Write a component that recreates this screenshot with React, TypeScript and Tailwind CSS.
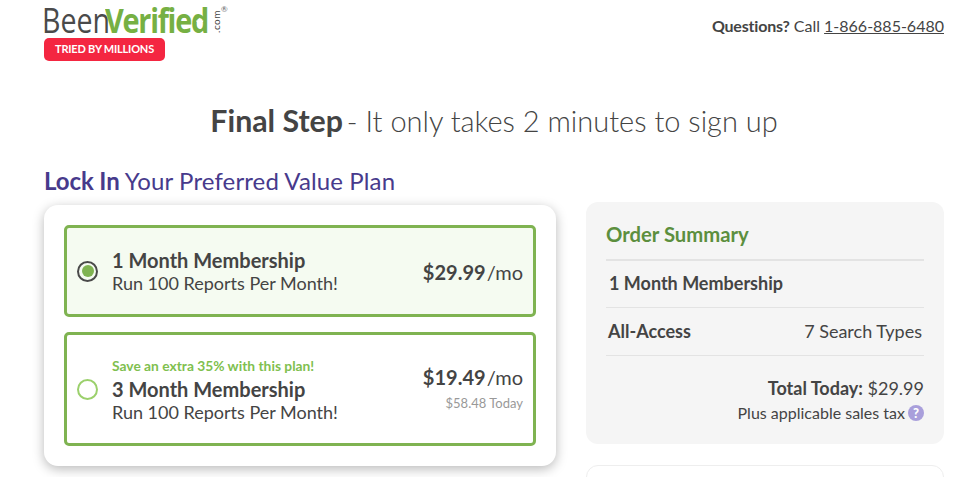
const font = { fontFamily: "Lato, 'Liberation Sans', sans-serif" };

function Logo() {
  return (
    <div className="flex items-start h-[33px] w-[190px]">
      <div className="flex w-[166px] shrink-0 ml-[-2px] text-[34px] leading-[30px] h-[33px] font-['Open_Sans',sans-serif] whitespace-nowrap">
        <span className="block w-[63px] shrink-0 origin-left scale-x-[0.84] text-[#4a4a4a]">Been</span>
        <span className="relative block w-[103px] shrink-0 origin-left scale-x-[0.85] font-bold text-[#76b043] tracking-[-1.5px]">
          Verified
          <svg className="absolute left-[105px] top-[12px]" width="13" height="10" viewBox="0 0 24 24" fill="#fff">
            <path d="M12 1l3.4 7.3 7.6.9-5.6 5.4 1.5 8L12 18.6 5.1 22.6l1.5-8L1 9.2l7.6-.9z" />
          </svg>
        </span>
      </div>
      <span className="text-[10px] leading-none tracking-[0.5px] text-[#444] [writing-mode:vertical-rl] rotate-180 mt-[5px] ml-[3px]">.com</span>
      <span className="text-[8px] leading-none text-[#666] mt-[0px]">®</span>
    </div>
  );
}

function PlanRow({ selected, promo, title, price, today }: { selected?: boolean; promo?: string; title: string; price: string; today?: string }) {
  return (
    <div className={`flex items-center border-[3px] border-[#7fb351] rounded-[5px] pl-[10px] pr-[10px] ${selected ? "h-[92px] bg-[#f5fbf1]" : "h-[114px] bg-white"}`}>
      {selected ? (
        <div className="w-[21px] h-[21px] rounded-full border-[2px] border-[#4a4a4a] flex items-center justify-center">
          <div className="w-[12px] h-[12px] rounded-full bg-[#7fb351]" />
        </div>
      ) : (
        <div className="w-[21px] h-[21px] rounded-full border-[2px] border-[#9bd06c]" />
      )}
      <div className={`ml-[14px] flex-1 ${selected ? "mb-[1px]" : ""}`}>
        {promo && <p className="text-[13.8px] leading-[18px] pt-[1px] mb-[1px] font-bold text-[#7fc04f]">{promo}</p>}
        <p className="text-[20px] leading-[26px] font-bold text-[#444]">{title}</p>
        <p className="text-[18px] leading-[21px] text-[#444]">Run 100 Reports Per Month!</p>
      </div>
      <div className={`text-right ${today ? "mb-[3px]" : "pt-[2px]"}`}>
        <p className="text-[20px] leading-[26px] text-[#444]">
          <span className="font-bold mr-[-4px]">{price}</span> /mo
        </p>
        {today && <p className="text-[13px] leading-[16px] mt-[5px] text-[#999]">{today}</p>}
      </div>
    </div>
  );
}

export default function App() {
  return (
    <div className="h-screen overflow-hidden bg-white text-[#444]" style={font}>
      <div className="w-[900px] ml-[44px]">
        {/* Header */}
        <header className="flex items-start justify-between pt-[5px]">
          <div>
            <Logo />
            <div className="w-[121px] h-[23px] bg-[#f42641] rounded-[5px] text-white text-[11px] tracking-[-0.2px] font-bold flex items-center justify-center">
              TRIED BY MILLIONS
            </div>
          </div>
          <p className="text-[16px] leading-[20px] mt-[11px]">
            <span className="font-bold tracking-[-0.2px]">Questions?</span> Call <span className="underline">1-866-885-6480</span>
          </p>
        </header>

        <h1 className="h-[36px] text-[29px] leading-[36px] text-center mt-[41px] font-light">
          <span className="font-bold text-[30.3px]">Final Step</span> <span className="ml-[-4px]">- It only takes 2 minutes to sign up</span>
        </h1>

        <h2 className="text-[24px] leading-[30px] text-[#473a8c] mt-[28px]">
          <span className="font-bold tracking-[-0.1px]">Lock In</span> <span className="ml-[-1px] tracking-[0.12px]">Your Preferred Value Plan</span>
        </h2>

        <div className="flex items-start justify-between">
          {/* Plans */}
          <div className="w-[512px] mt-[9px] bg-white rounded-[14px] shadow-[0_3px_12px_rgba(0,0,0,0.28)] p-[20px] flex flex-col gap-[15px]">
            <PlanRow selected title="1 Month Membership" price="$29.99" />
            <PlanRow promo="Save an extra 35% with this plan!" title="3 Month Membership" price="$19.49" today="$58.48 Today" />
          </div>

          {/* Order summary */}
          <div className="w-[358px] mt-[6px]">
            <div className="h-[242px] bg-[#f5f5f5] rounded-[12px] px-[20px] pt-[19px]">
              <h3 className="text-[20.3px] leading-[26px] font-bold text-[#5c8f3e] h-[38px]">Order Summary</h3>
              <div className="border-t-2 border-[#e3e3e3] h-[48px] flex items-center pl-[3px] pb-[2px] text-[18px] font-bold">1 Month Membership</div>
              <div className="border-t border-[#e3e3e3] h-[48px] flex items-center justify-between px-[2px] text-[18px]">
                <span className="font-bold">All-Access</span>
                <span>7 Search Types</span>
              </div>
              <div className="border-t border-[#e3e3e3] text-right pt-[20px]">
                <p className="text-[18px] leading-[24px]">
                  <span className="font-bold">Total Today:</span> $29.99
                </p>
                <p className="text-[16px] leading-[20px] mt-[3px] flex items-center justify-end gap-[3px]">
                  Plus applicable sales tax
                  <span className="w-[16px] h-[16px] rounded-full bg-[#a99fdb] text-white text-[13px] font-black leading-none flex items-center justify-center">?</span>
                </p>
              </div>
            </div>
            <div className="h-[40px] mt-[21px] bg-white border border-[#eeeeee] rounded-[12px]" />
          </div>
        </div>
      </div>
    </div>
  );
}
